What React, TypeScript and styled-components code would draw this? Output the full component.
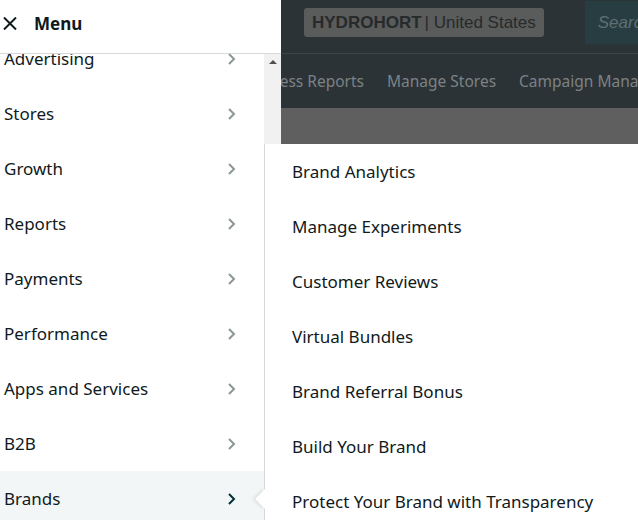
import React from 'react';
import styled, {createGlobalStyle, css} from 'styled-components';

const GlobalStyle = createGlobalStyle`
  html, body {margin: 0; padding: 0; background: #5f5f5f;}
  body {font-family: "Noto Sans", "Open Sans", sans-serif;}
`;

const Page = styled.div`position: relative; width: 638px; height: 520px; overflow: hidden; background: #5f5f5f;`;

const TopBar = styled.div`
  height: 53px;
  background: #2b3336;
  border-bottom: 1px solid #3b4447;
  display: flex;
  align-items: flex-start;
  padding-left: 282px;
  box-sizing: content-box;`;
const Divider = styled.div`width: 1px; height: 26px; margin-top: 10px; background: #4a5254;`;
const StoreBadge = styled.div`
  margin: 8px 0 0 22px;
  height: 29px;
  padding: 0 8px;
  display: flex;
  align-items: center;
  background: #5a5b5b;
  border-radius: 3px;
  font: 17px "Liberation Sans", Arial, sans-serif;
  color: #262a2b;
  white-space: nowrap;
  b {font-weight: bold; margin-right: 3px;}`;
const SearchBox = styled.div`
  margin: 1px 0 0 41px;
  height: 43px;
  flex: 1;
  background: #273d42;
  display: flex;
  align-items: center;
  padding-left: 13px;
  font: italic 17px "Liberation Sans", Arial, sans-serif;
  color: #5f7074;`;

const NavRow = styled.div`
  height: 54px;
  background: #2b3336;
  display: flex;
  align-items: center;
  gap: 23px;
  font-size: 15.5px;
  color: #7b8285;
  white-space: nowrap;`;
const NavLead = styled.div`width: 364px; flex: none; display: flex; justify-content: flex-end;`;

const Drawer = styled.div`
  position: absolute;
  left: 0; top: 0;
  width: 281px;
  height: 520px;
  background: #fff;
  display: flex;
  flex-direction: column;`;
const DrawerHeader = styled.div`
  height: 54px;
  flex: none;
  box-sizing: border-box;
  padding: 0 0 7px 3px;
  border-bottom: 1px solid #d5d9d9;
  display: flex;
  align-items: center;
  gap: 17px;
  font-weight: 700;
  font-size: 17px;
  color: #0f1a1c;
  position: relative;
  z-index: 1;
  background: #fff;`;
const DrawerBody = styled.div`flex: 1; display: flex; min-height: 0;`;
const List = styled.div`flex: 1; overflow: hidden;`;
const ListInner = styled.div`margin-top: -23px;`;
const Scrollbar = styled.div`
  width: 17px;
  flex: none;
  background: #f1f1f1;
  display: flex;
  justify-content: center;
  padding-top: 6px;
  box-sizing: border-box;`;
const ScrollUp = styled.div`
  width: 0; height: 0;
  border-left: 4px solid transparent;
  border-right: 4px solid transparent;
  border-bottom: 4px solid #505050;`;

const rowText = css`font-size: 17px; color: #0f1a1c; white-space: nowrap;`;
const MenuRow = styled.div<{$active?: boolean}>`
  height: 55px;
  display: flex;
  align-items: center;
  justify-content: space-between;
  padding: 0 28px 0 4px;
  background: ${p => p.$active ? '#f3f6f6' : 'transparent'};
  ${rowText}`;
const Chevron = styled.svg<{$active?: boolean}>`
  width: 10px; height: 14px;
  stroke: ${p => p.$active ? '#002f36' : '#8d9696'};
  stroke-width: 2;
  fill: none;`;

const Flyout = styled.div`
  position: absolute;
  left: 264px; top: 144px;
  right: 0; bottom: 0;
  background: #fff;
  border-left: 1px solid #d5d9d9;
  z-index: 2;`;
const Pointer = styled.div`
  position: absolute;
  left: -7px; top: 348px;
  width: 14px; height: 14px;
  background: #fff;
  transform: rotate(45deg);
  box-shadow: -2px 2px 3px rgba(0,0,0,0.08);`;
const FlyItem = styled.div`
  position: relative;
  height: 55px;
  display: flex;
  align-items: center;
  padding-left: 27px;
  ${rowText}`;

const menu = ['Advertising', 'Stores', 'Growth', 'Reports', 'Payments', 'Performance', 'Apps and Services', 'B2B', 'Brands'];
const brandItems = ['Brand Analytics', 'Manage Experiments', 'Customer Reviews', 'Virtual Bundles', 'Brand Referral Bonus', 'Build Your Brand', 'Protect Your Brand with Transparency'];

function ChevronIcon({active}: {active?: boolean}) {
    return (
        <Chevron $active={active} viewBox="0 0 10 14">
            <path d="M3 2l5 5-5 5"/>
        </Chevron>
    );
}

export default function App() {
    return (
        <Page>
            <GlobalStyle/>
            <TopBar>
                <Divider/>
                <StoreBadge><b>HYDROHORT</b>| United States</StoreBadge>
                <SearchBox>Search</SearchBox>
            </TopBar>
            <NavRow>
                <NavLead>Business Reports</NavLead>
                <span>Manage Stores</span>
                <span>Campaign Manager</span>
            </NavRow>

            <Drawer>
                <DrawerHeader>
                    <svg width="14" height="13" viewBox="0 0 14 13" stroke="#0f1a1c" strokeWidth="2" fill="none">
                        <path d="M1 0.5l12 12M13 0.5L1 12.5"/>
                    </svg>
                    Menu
                </DrawerHeader>
                <DrawerBody>
                    <List>
                        <ListInner>
                            {menu.map(item => (
                                <MenuRow key={item} $active={item === 'Brands'}>
                                    {item}
                                    <ChevronIcon active={item === 'Brands'}/>
                                </MenuRow>
                            ))}
                        </ListInner>
                    </List>
                    <Scrollbar><ScrollUp/></Scrollbar>
                </DrawerBody>
            </Drawer>

            <Flyout>
                <Pointer/>
                {brandItems.map(item => <FlyItem key={item}>{item}</FlyItem>)}
            </Flyout>
        </Page>
    );
}
